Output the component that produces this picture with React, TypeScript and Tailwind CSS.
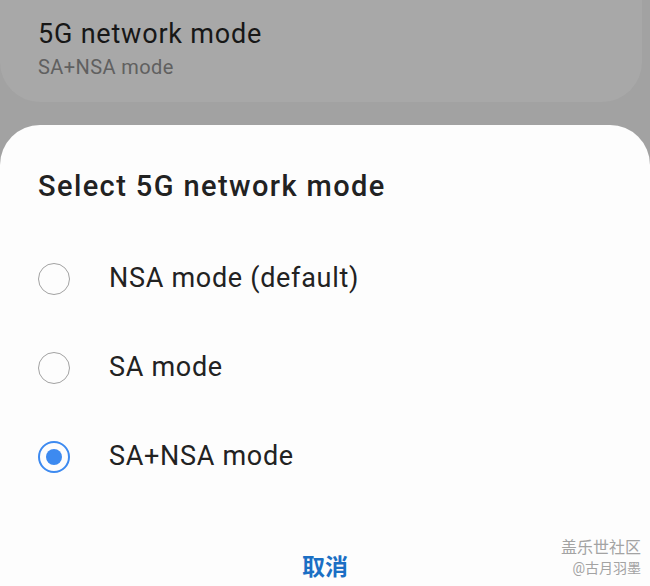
const options = ["NSA mode (default)", "SA mode", "SA+NSA mode"];

function Radio({ checked }: { checked: boolean }) {
  if (checked) {
    return (
      <span className="flex h-[32px] w-[32px] shrink-0 items-center justify-center rounded-full border-[2px] border-[#3d8af0]">
        <span className="h-[16px] w-[16px] rounded-full bg-[#3d8af0]" />
      </span>
    );
  }
  return <span className="h-[32px] w-[32px] shrink-0 rounded-full border-[1.5px] border-[#a2a2a2]" />;
}

export default function App() {
  const selected = 2;
  return (
    <div
      className="flex h-[586px] w-[650px] flex-col overflow-hidden bg-[#a2a2a2]"
      style={{ fontFamily: "Roboto, 'Noto Sans CJK SC', sans-serif" }}
    >
      <div className="mr-[8px] flex h-[102px] shrink-0 flex-col rounded-br-[40px] rounded-bl-[40px] bg-[#a8a8a8] pl-[38px] pt-[16px]">
        <div className="text-[27px] leading-[36px] tracking-[0.8px] text-[#171717]">5G network mode</div>
        <div className="text-[20px] leading-[30px] tracking-[0.4px] text-[#606060]">SA+NSA mode</div>
      </div>
      <div className="mt-[23px] flex flex-1 flex-col rounded-t-[40px] bg-[#fdfdfd]">
        <div className="pl-[38px] pt-[43px] text-[29px] font-medium leading-[36px] tracking-[1.4px] text-[#222]">
          Select 5G network mode
        </div>
        <div className="mt-[30px] flex flex-col">
          {options.map((o, i) => (
            <div key={o} className="flex h-[89px] items-center pl-[38px]">
              <Radio checked={i === selected} />
              <span className="ml-[39px] text-[27px] tracking-[0.7px] text-[#222]">{o}</span>
            </div>
          ))}
        </div>
        <div className="relative flex-1">
          <div className="absolute left-0 right-0 top-[50px] text-center text-[23px] font-bold text-[#1b6fc4]">
            取消
          </div>
          <div className="absolute right-[9px] top-[37px] flex flex-col items-end text-[#a3a3a3]">
            <span className="text-[16px] leading-[20px]">盖乐世社区</span>
            <span className="text-[14px] leading-[20px]">@古月羽墨</span>
          </div>
        </div>
      </div>
    </div>
  );
}
